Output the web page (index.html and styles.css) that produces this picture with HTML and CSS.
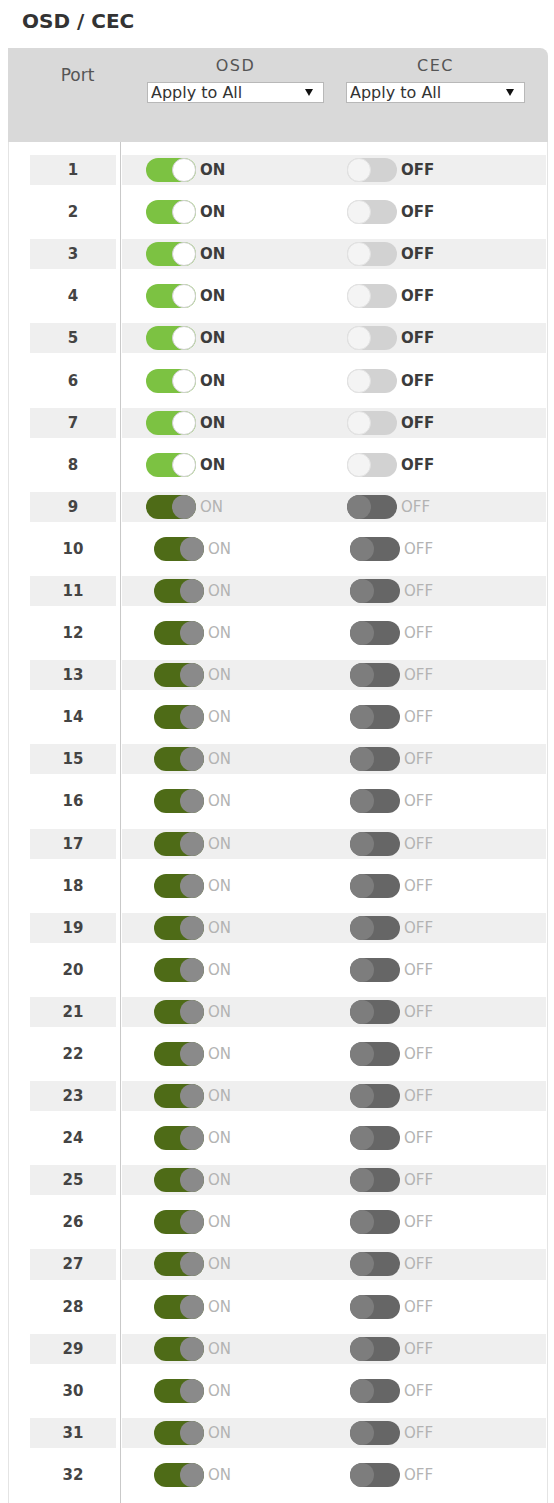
FILE: index.html
```html
<!DOCTYPE html>
<html lang="en">
  <head>
    <meta charset="UTF-8" />
    <meta name="viewport" content="width=device-width, initial-scale=1.0" />
    <title>OSD / CEC</title>
    <link rel="stylesheet" href="styles.css">
  </head>
  <body>
    <h1 class="title">OSD / CEC</h1>

    <div class="panel">
      <div class="panel-head">
        <div class="head-port">Port</div>
        <div class="head-col">
          <span>OSD</span>
          <div class="select-wrap">
            <select><option>Apply to All</option><option>ON</option><option>OFF</option></select>
          </div>
        </div>
        <div class="head-col cec-col">
          <span>CEC</span>
          <div class="select-wrap">
            <select><option>Apply to All</option><option>ON</option><option>OFF</option></select>
          </div>
        </div>
      </div>

      <div class="panel-body">
        <div class="row"><div class="port">1</div><div class="cells"><div class="toggle osd"><span class="track on"><i class="knob"></i></span><span class="state">ON</span></div><div class="toggle cec"><span class="track off"><i class="knob"></i></span><span class="state">OFF</span></div></div></div>
        <div class="row"><div class="port">2</div><div class="cells"><div class="toggle osd"><span class="track on"><i class="knob"></i></span><span class="state">ON</span></div><div class="toggle cec"><span class="track off"><i class="knob"></i></span><span class="state">OFF</span></div></div></div>
        <div class="row"><div class="port">3</div><div class="cells"><div class="toggle osd"><span class="track on"><i class="knob"></i></span><span class="state">ON</span></div><div class="toggle cec"><span class="track off"><i class="knob"></i></span><span class="state">OFF</span></div></div></div>
        <div class="row"><div class="port">4</div><div class="cells"><div class="toggle osd"><span class="track on"><i class="knob"></i></span><span class="state">ON</span></div><div class="toggle cec"><span class="track off"><i class="knob"></i></span><span class="state">OFF</span></div></div></div>
        <div class="row"><div class="port">5</div><div class="cells"><div class="toggle osd"><span class="track on"><i class="knob"></i></span><span class="state">ON</span></div><div class="toggle cec"><span class="track off"><i class="knob"></i></span><span class="state">OFF</span></div></div></div>
        <div class="row"><div class="port">6</div><div class="cells"><div class="toggle osd"><span class="track on"><i class="knob"></i></span><span class="state">ON</span></div><div class="toggle cec"><span class="track off"><i class="knob"></i></span><span class="state">OFF</span></div></div></div>
        <div class="row"><div class="port">7</div><div class="cells"><div class="toggle osd"><span class="track on"><i class="knob"></i></span><span class="state">ON</span></div><div class="toggle cec"><span class="track off"><i class="knob"></i></span><span class="state">OFF</span></div></div></div>
        <div class="row"><div class="port">8</div><div class="cells"><div class="toggle osd"><span class="track on"><i class="knob"></i></span><span class="state">ON</span></div><div class="toggle cec"><span class="track off"><i class="knob"></i></span><span class="state">OFF</span></div></div></div>
        <div class="row locked"><div class="port">9</div><div class="cells"><div class="toggle osd"><span class="track on"><i class="knob"></i></span><span class="state">ON</span></div><div class="toggle cec"><span class="track off"><i class="knob"></i></span><span class="state">OFF</span></div></div></div>
        <div class="row locked shift"><div class="port">10</div><div class="cells"><div class="toggle osd"><span class="track on"><i class="knob"></i></span><span class="state">ON</span></div><div class="toggle cec"><span class="track off"><i class="knob"></i></span><span class="state">OFF</span></div></div></div>
        <div class="row locked shift"><div class="port">11</div><div class="cells"><div class="toggle osd"><span class="track on"><i class="knob"></i></span><span class="state">ON</span></div><div class="toggle cec"><span class="track off"><i class="knob"></i></span><span class="state">OFF</span></div></div></div>
        <div class="row locked shift"><div class="port">12</div><div class="cells"><div class="toggle osd"><span class="track on"><i class="knob"></i></span><span class="state">ON</span></div><div class="toggle cec"><span class="track off"><i class="knob"></i></span><span class="state">OFF</span></div></div></div>
        <div class="row locked shift"><div class="port">13</div><div class="cells"><div class="toggle osd"><span class="track on"><i class="knob"></i></span><span class="state">ON</span></div><div class="toggle cec"><span class="track off"><i class="knob"></i></span><span class="state">OFF</span></div></div></div>
        <div class="row locked shift"><div class="port">14</div><div class="cells"><div class="toggle osd"><span class="track on"><i class="knob"></i></span><span class="state">ON</span></div><div class="toggle cec"><span class="track off"><i class="knob"></i></span><span class="state">OFF</span></div></div></div>
        <div class="row locked shift"><div class="port">15</div><div class="cells"><div class="toggle osd"><span class="track on"><i class="knob"></i></span><span class="state">ON</span></div><div class="toggle cec"><span class="track off"><i class="knob"></i></span><span class="state">OFF</span></div></div></div>
        <div class="row locked shift"><div class="port">16</div><div class="cells"><div class="toggle osd"><span class="track on"><i class="knob"></i></span><span class="state">ON</span></div><div class="toggle cec"><span class="track off"><i class="knob"></i></span><span class="state">OFF</span></div></div></div>
        <div class="row locked shift"><div class="port">17</div><div class="cells"><div class="toggle osd"><span class="track on"><i class="knob"></i></span><span class="state">ON</span></div><div class="toggle cec"><span class="track off"><i class="knob"></i></span><span class="state">OFF</span></div></div></div>
        <div class="row locked shift"><div class="port">18</div><div class="cells"><div class="toggle osd"><span class="track on"><i class="knob"></i></span><span class="state">ON</span></div><div class="toggle cec"><span class="track off"><i class="knob"></i></span><span class="state">OFF</span></div></div></div>
        <div class="row locked shift"><div class="port">19</div><div class="cells"><div class="toggle osd"><span class="track on"><i class="knob"></i></span><span class="state">ON</span></div><div class="toggle cec"><span class="track off"><i class="knob"></i></span><span class="state">OFF</span></div></div></div>
        <div class="row locked shift"><div class="port">20</div><div class="cells"><div class="toggle osd"><span class="track on"><i class="knob"></i></span><span class="state">ON</span></div><div class="toggle cec"><span class="track off"><i class="knob"></i></span><span class="state">OFF</span></div></div></div>
        <div class="row locked shift"><div class="port">21</div><div class="cells"><div class="toggle osd"><span class="track on"><i class="knob"></i></span><span class="state">ON</span></div><div class="toggle cec"><span class="track off"><i class="knob"></i></span><span class="state">OFF</span></div></div></div>
        <div class="row locked shift"><div class="port">22</div><div class="cells"><div class="toggle osd"><span class="track on"><i class="knob"></i></span><span class="state">ON</span></div><div class="toggle cec"><span class="track off"><i class="knob"></i></span><span class="state">OFF</span></div></div></div>
        <div class="row locked shift"><div class="port">23</div><div class="cells"><div class="toggle osd"><span class="track on"><i class="knob"></i></span><span class="state">ON</span></div><div class="toggle cec"><span class="track off"><i class="knob"></i></span><span class="state">OFF</span></div></div></div>
        <div class="row locked shift"><div class="port">24</div><div class="cells"><div class="toggle osd"><span class="track on"><i class="knob"></i></span><span class="state">ON</span></div><div class="toggle cec"><span class="track off"><i class="knob"></i></span><span class="state">OFF</span></div></div></div>
        <div class="row locked shift"><div class="port">25</div><div class="cells"><div class="toggle osd"><span class="track on"><i class="knob"></i></span><span class="state">ON</span></div><div class="toggle cec"><span class="track off"><i class="knob"></i></span><span class="state">OFF</span></div></div></div>
        <div class="row locked shift"><div class="port">26</div><div class="cells"><div class="toggle osd"><span class="track on"><i class="knob"></i></span><span class="state">ON</span></div><div class="toggle cec"><span class="track off"><i class="knob"></i></span><span class="state">OFF</span></div></div></div>
        <div class="row locked shift"><div class="port">27</div><div class="cells"><div class="toggle osd"><span class="track on"><i class="knob"></i></span><span class="state">ON</span></div><div class="toggle cec"><span class="track off"><i class="knob"></i></span><span class="state">OFF</span></div></div></div>
        <div class="row locked shift"><div class="port">28</div><div class="cells"><div class="toggle osd"><span class="track on"><i class="knob"></i></span><span class="state">ON</span></div><div class="toggle cec"><span class="track off"><i class="knob"></i></span><span class="state">OFF</span></div></div></div>
        <div class="row locked shift"><div class="port">29</div><div class="cells"><div class="toggle osd"><span class="track on"><i class="knob"></i></span><span class="state">ON</span></div><div class="toggle cec"><span class="track off"><i class="knob"></i></span><span class="state">OFF</span></div></div></div>
        <div class="row locked shift"><div class="port">30</div><div class="cells"><div class="toggle osd"><span class="track on"><i class="knob"></i></span><span class="state">ON</span></div><div class="toggle cec"><span class="track off"><i class="knob"></i></span><span class="state">OFF</span></div></div></div>
        <div class="row locked shift"><div class="port">31</div><div class="cells"><div class="toggle osd"><span class="track on"><i class="knob"></i></span><span class="state">ON</span></div><div class="toggle cec"><span class="track off"><i class="knob"></i></span><span class="state">OFF</span></div></div></div>
        <div class="row locked shift"><div class="port">32</div><div class="cells"><div class="toggle osd"><span class="track on"><i class="knob"></i></span><span class="state">ON</span></div><div class="toggle cec"><span class="track off"><i class="knob"></i></span><span class="state">OFF</span></div></div></div>
      </div>
    </div>
  </body>
</html>
```

FILE: styles.css
```css
body {
  margin: 0;
  font-family: "DejaVu Sans", Verdana, sans-serif;
  color: #333;
  background: #fff;
}

.title {
  font-size: 20px;
  font-weight: bold;
  line-height: 24px;
  margin: 9px 0 15px 22px;
  color: #333;
}

.panel {
  margin-left: 8px;
  width: 540px;
}

/* grey header with the bulk selects */
.panel-head {
  height: 94px;
  background: #d9d9d9;
  border-top-right-radius: 8px;
  display: flex;
  color: #555;
}

.head-port {
  width: 139px;
  text-align: center;
  font-size: 17px;
  line-height: 20px;
  padding-top: 17px;
}

.head-col {
  width: 177px;
  display: flex;
  flex-direction: column;
  align-items: center;
  padding-top: 9px;
  font-size: 16px;
  line-height: 18px;
  letter-spacing: 1.5px;
}

.head-col span {
  margin-bottom: 7px;
}

.cec-col {
  width: 179px;
  margin-left: 22px;
}

.select-wrap {
  position: relative;
  width: 100%;
}

.select-wrap select {
  appearance: none;
  -webkit-appearance: none;
  width: 100%;
  height: 21px;
  margin: 0;
  padding: 0 3px;
  border: 1px solid #b8b8b8;
  border-radius: 0;
  background: #fff;
  color: #333;
  font-family: "DejaVu Sans", Verdana, sans-serif;
  font-size: 16px;
  letter-spacing: 0;
}

.select-wrap::after {
  content: "";
  position: absolute;
  right: 11px;
  top: 7px;
  border-left: 4px solid transparent;
  border-right: 4px solid transparent;
  border-top: 7px solid #111;
  pointer-events: none;
}

/* port list */
.panel-body {
  border-left: 1px solid #e4e4e4;
  border-right: 1px solid #e4e4e4;
  padding: 7px 0 12px;
  background: linear-gradient(#c9c9c9, #c9c9c9) no-repeat 111px 0 / 1px 100%;
}

.row {
  display: flex;
  height: 42.1px;
  padding: 6px 0;
  box-sizing: border-box;
}

.port {
  width: 86px;
  margin-left: 21px;
  display: flex;
  align-items: center;
  justify-content: center;
  font-size: 15px;
  font-weight: bold;
  color: #444;
}

.cells {
  flex: 1;
  margin: 0 1px 0 6px;
  padding-left: 24px;
  display: grid;
  grid-template-columns: 201px 1fr;
  align-items: center;
}

.row:nth-child(odd) .port,
.row:nth-child(odd) .cells {
  background: #efefef;
}

.toggle {
  display: flex;
  align-items: center;
}

.track {
  width: 50px;
  height: 24px;
  border-radius: 12px;
  display: flex;
  box-sizing: border-box;
}

.knob {
  width: 24px;
  height: 24px;
  border-radius: 50%;
  box-sizing: border-box;
}

.track.on {
  background: #7cc242;
  justify-content: flex-end;
}

.track.on .knob {
  background: #fff;
  border: 1px solid #cfcfcf;
}

.track.off {
  background: #d2d2d2;
}

.track.off .knob {
  background: #f4f4f4;
  border: 1px solid #e2e2e2;
}

.state {
  margin-left: 4px;
  font-size: 15px;
  font-weight: bold;
  color: #3c3c3c;
}

/* ports that follow the global setting */
.locked .track.on {
  background: #4e6b17;
}

.locked .track.on .knob {
  background: #8a8a8a;
  border: none;
}

.locked .track.off {
  background: #666;
}

.locked .track.off .knob {
  background: #7d7d7d;
  border: none;
}

.locked .state {
  color: #b3b3b3;
  font-weight: normal;
}

.shift .osd {
  margin-left: 8px;
}

.shift .cec {
  margin-left: 3px;
}
```
